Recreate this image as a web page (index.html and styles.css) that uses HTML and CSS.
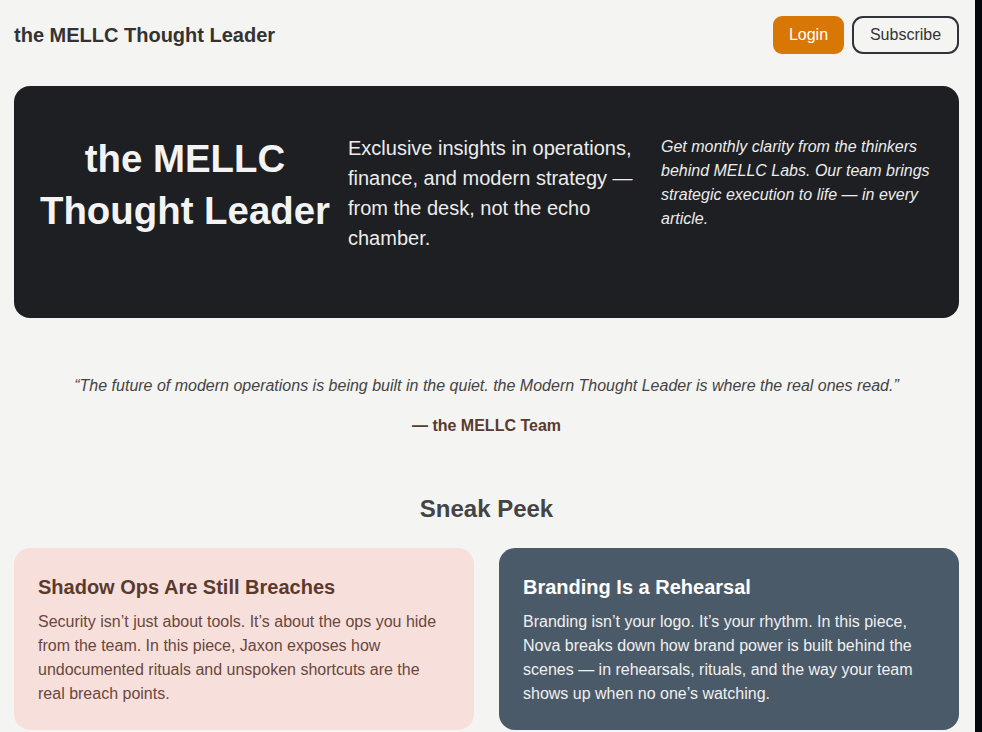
FILE: index.html
```html
<!DOCTYPE html>
<html lang="en">
<head>
<meta charset="utf-8">
<title>the MELLC Thought Leader</title>
<link rel="stylesheet" href="styles.css">
</head>
<body>
<div class="page">
  <header class="topbar">
    <div class="brand">the MELLC Thought Leader</div>
    <nav class="actions">
      <a class="btn btn-login" href="#">Login</a>
      <a class="btn btn-sub" href="#">Subscribe</a>
    </nav>
  </header>

  <section class="hero">
    <h1 class="hero-title">the MELLC<br>Thought Leader</h1>
    <p class="hero-lead">Exclusive insights in operations, finance, and modern strategy — from the desk, not the echo chamber.</p>
    <p class="hero-note">Get monthly clarity from the thinkers behind MELLC Labs. Our team brings strategic execution to life — in every article.</p>
  </section>

  <section class="quote">
    <p class="quote-text">“The future of modern operations is being built in the quiet. the Modern Thought Leader is where the real ones read.”</p>
    <p class="quote-author">— the MELLC Team</p>
  </section>

  <section class="peek">
    <h2 class="peek-title">Sneak Peek</h2>
    <div class="cards">
      <article class="card card-pink">
        <h3 class="card-title">Shadow Ops Are Still Breaches</h3>
        <p class="card-text">Security isn’t just about tools. It’s about the ops you hide from the team. In this piece, Jaxon exposes how undocumented rituals and unspoken shortcuts are the real breach points.</p>
      </article>
      <article class="card card-slate">
        <h3 class="card-title">Branding Is a Rehearsal</h3>
        <p class="card-text">Branding isn’t your logo. It’s your rhythm. In this piece, Nova breaks down how brand power is built behind the scenes — in rehearsals, rituals, and the way your team shows up when no one’s watching.</p>
      </article>
    </div>
  </section>
</div>
</body>
</html>
```
FILE: styles.css
```css
html {
  background: #05080c;
  height: 100%;
}
body {
  margin: 0;
  height: 100%;
  overflow: hidden;
  font-family: "Liberation Sans", Arial, Helvetica, sans-serif;
}
.page {
  width: 975px;
  min-height: 100%;
  box-sizing: border-box;
  background: #f4f4f2;
  padding: 16px 16px 0 14px;
}
.topbar {
  display: flex;
  justify-content: space-between;
  align-items: center;
  height: 38px;
}
.brand {
  font-size: 20px;
  font-weight: 700;
  color: #333;
}
.actions {
  display: flex;
  gap: 8px;
}
.btn {
  display: flex;
  align-items: center;
  justify-content: center;
  box-sizing: border-box;
  height: 38px;
  font-size: 16px;
  text-decoration: none;
}
.btn-login {
  width: 71px;
  background: #d97706;
  color: #fff;
  border-radius: 9px;
}
.btn-sub {
  width: 107px;
  border: 2px solid #2f3238;
  color: #333;
  border-radius: 11px;
}
.hero {
  margin-top: 32px;
  background: #1d1f23;
  border-radius: 16px;
  padding: 47px 24px 0 24px;
  height: 232px;
  box-sizing: border-box;
  display: grid;
  grid-template-columns: 294px 297px 1fr;
  column-gap: 16px;
  align-items: start;
}
.hero-title {
  margin: 0;
  text-align: center;
  font-size: 38.4px;
  line-height: 52px;
  font-weight: 700;
  color: #f3f3f3;
  white-space: nowrap;
}
.hero-lead {
  margin: 0;
  font-size: 20px;
  line-height: 30px;
  color: #ececec;
}
.hero-note {
  margin: 2px 0 0 0;
  font-size: 16px;
  line-height: 24px;
  font-style: italic;
  color: #ececec;
}
.quote {
  margin-top: 56px;
  text-align: center;
}
.quote-text {
  margin: 0;
  font-size: 16px;
  line-height: 24px;
  font-style: italic;
  color: #444;
}
.quote-author {
  margin: 16px 0 0 0;
  font-size: 16px;
  line-height: 24px;
  font-weight: 700;
  color: #5b3a2e;
}
.peek {
  margin-top: 56px;
}
.peek-title {
  margin: 0;
  text-align: center;
  font-size: 24px;
  line-height: 30px;
  font-weight: 700;
  color: #444;
}
.cards {
  margin-top: 24px;
  display: grid;
  grid-template-columns: 1fr 1fr;
  column-gap: 25px;
}
.card {
  border-radius: 16px;
  padding: 26px 24px 24px 24px;
}
.card-title {
  margin: 0 0 10px 0;
  font-size: 20px;
  line-height: 26px;
  font-weight: 700;
}
.card-text {
  margin: 0;
  font-size: 16px;
  line-height: 24px;
}
.card-pink {
  background: #f7e0dc;
}
.card-pink .card-title {
  color: #5b3a2e;
}
.card-pink .card-text {
  color: #6a473c;
}
.card-slate {
  background: #4b5a68;
}
.card-slate .card-title {
  color: #ffffff;
}
.card-slate .card-text {
  color: #f0f0f0;
}
```
